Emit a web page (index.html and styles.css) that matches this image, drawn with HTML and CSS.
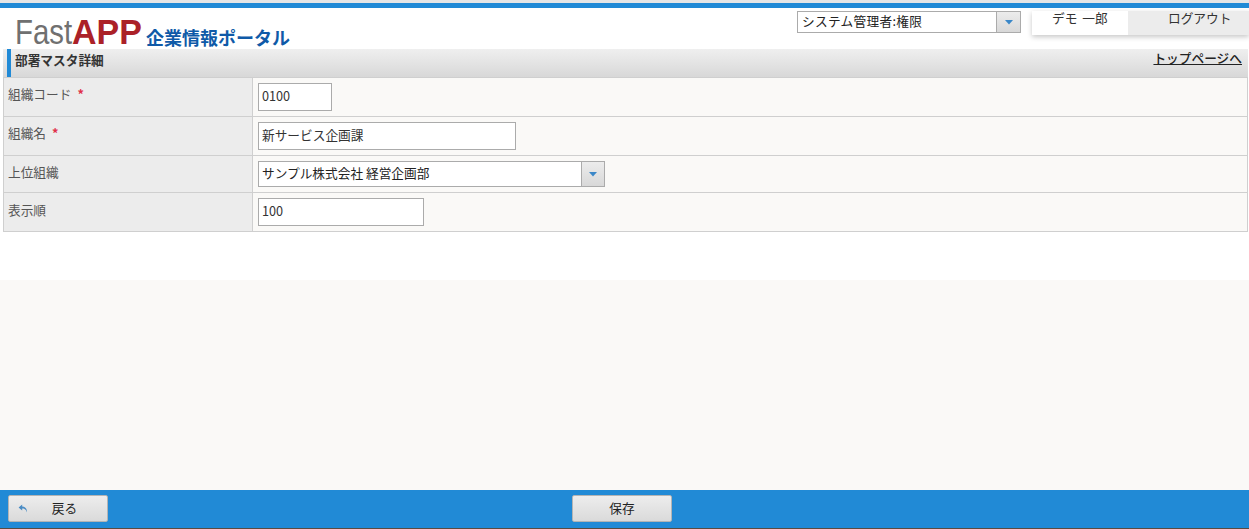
FILE: index.html
```html
<!DOCTYPE html>
<html lang="ja">
<head>
<meta charset="utf-8">
<title>部署マスタ詳細</title>
<link rel="stylesheet" href="styles.css">
</head>
<body>
<div class="page">
  <header class="header">
    <div class="logo">
      <span class="logo-fast">Fast</span><span class="logo-app">APP</span>
      <span class="logo-sub">企業情報ポータル</span>
    </div>
    <div class="header-right">
      <div class="select role-select">
        <span class="select-text">システム管理者:権限</span>
        <span class="select-btn"><svg width="8" height="5" viewBox="0 0 8 5"><path d="M0 0h8L4 4.5z" fill="#3a87c8"/></svg></span>
      </div>
      <div class="user-box">
        <span class="user-name">デモ 一郎</span>
        <span class="logout">ログアウト</span>
      </div>
    </div>
  </header>
  <main class="content">
    <div class="title-bar">
      <h1 class="title">部署マスタ詳細</h1>
      <a class="top-link" href="#">トップページへ</a>
    </div>
    <div class="form">
      <div class="row row-a">
        <div class="label label-a">組織コード<span class="req">*</span></div>
        <div class="field"><div class="input w-code">0100</div></div>
      </div>
      <div class="row row-a">
        <div class="label label-a">組織名<span class="req">*</span></div>
        <div class="field"><div class="input w-name">新サービス企画課</div></div>
      </div>
      <div class="row row-b">
        <div class="label label-b">上位組織</div>
        <div class="field">
          <div class="select parent-select">
            <span class="select-text">サンプル株式会社 経営企画部</span>
            <span class="select-btn"><svg width="8" height="5" viewBox="0 0 8 5"><path d="M0 0h8L4 4.5z" fill="#3a87c8"/></svg></span>
          </div>
        </div>
      </div>
      <div class="row row-c">
        <div class="label label-c">表示順</div>
        <div class="field"><div class="input w-order">100</div></div>
      </div>
    </div>
  </main>
  <div class="spacer"></div>
  <footer class="footer">
    <button class="btn btn-back" type="button">
      <svg class="back-icon" width="10" height="9" viewBox="0 0 10 9"><path d="M4.2 0.5 0.6 3.6l3.6 3V4.6c2 0 3.6.5 4.8 3.8C9 4.6 7.2 2.6 4.2 2.5z" fill="#4a8cc4"/></svg>
      <span>戻る</span>
    </button>
    <button class="btn btn-save" type="button">保存</button>
  </footer>
</div>
</body>
</html>
```
FILE: styles.css
```css
* { box-sizing: border-box; }
html, body { margin: 0; padding: 0; height: 100%; }
body {
  background: #fff;
  font-family: "Noto Sans CJK JP", "Liberation Sans", sans-serif;
  font-size: 12.7px;
  color: #333;
  overflow: hidden;
}
.page {
  height: 529px;
  display: flex;
  flex-direction: column;
  border-top: 3px solid #e6e6e6;
  border-bottom: 1px solid #5a4a40;
}
.header {
  height: 46px;
  flex: none;
  border-top: 5px solid #218ad6;
  display: flex;
  justify-content: space-between;
}
.logo {
  padding: 6px 0 0 15px;
  display: flex;
  align-items: baseline;
  white-space: nowrap;
  height: 41px;
  line-height: 36px;
}
.logo-fast {
  display: inline-block;
  font-family: "Liberation Sans", sans-serif;
  font-size: 35px;
  color: #707070;
  transform: scaleX(0.84);
  transform-origin: left;
  margin-right: -11px;
}
.logo-app {
  display: inline-block;
  font-family: "Liberation Sans", sans-serif;
  font-size: 35px;
  font-weight: 700;
  color: #ab2128;
  transform: scaleX(0.97);
  transform-origin: left;
  margin-right: -2px;
}
.logo-sub {
  font-size: 18px;
  font-weight: 700;
  color: #0f5aa8;
  margin-left: 4px;
  transform: translateY(1px);
}
.header-right {
  display: flex;
  align-items: flex-start;
  padding-top: 3px;
}
.select {
  display: flex;
  background: #fff;
  border: 1px solid #ababab;
}
.select-text {
  flex: 1;
  padding-left: 4px;
  color: #222;
  white-space: nowrap;
}
.select-btn {
  display: flex;
  align-items: center;
  justify-content: center;
  border-left: 1px solid #ababab;
  background: linear-gradient(#ececec, #d8d8d8);
}
.role-select {
  width: 224px;
  height: 22px;
  line-height: 17px;
  letter-spacing: 0.3px;
}
.role-select .select-btn { width: 24px; }
.user-box {
  width: 217px;
  height: 24px;
  margin-left: 11px;
  display: flex;
  box-shadow: 0 2px 5px rgba(0, 0, 0, 0.22);
  line-height: 14px;
  color: #333;
}
.user-name {
  width: 96px;
  padding-left: 20px;
  background: #fff;
  white-space: nowrap;
  word-spacing: 2px;
}
.logout {
  flex: 1;
  padding-left: 40px;
  background: #ececec;
  white-space: nowrap;
}
.content {
  flex: none;
  padding: 0 1px 0 3px;
}
.title-bar {
  height: 28px;
  display: flex;
  justify-content: space-between;
  background: linear-gradient(#efefef, #d8d8d8);
  padding-right: 6px;
}
.title {
  margin: 0 0 0 4px;
  padding-left: 4px;
  border-left: 4px solid #218ad6;
  font-size: 12.7px;
  font-weight: 700;
  color: #333;
  line-height: 22px;
  height: 28px;
}
.top-link {
  color: #222;
  line-height: 18px;
  text-decoration: underline;
  font-weight: 500;
}
.form {
  border: 1px solid #cfcfcf;
  border-bottom-width: 0;
  background: #faf9f7;
}
.row {
  display: flex;
  border-bottom: 1px solid #cfcfcf;
}
.row-a { height: 39px; }
.row-b { height: 37px; }
.row-c { height: 39px; }
.label {
  width: 249px;
  flex: none;
  background: #ececec;
  border-right: 1px solid #cfcfcf;
  padding: 0 0 0 4px;
  color: #555;
}
.label-a { line-height: 32px; }
.label-b { line-height: 31px; }
.label-c { line-height: 33px; }
.req {
  color: #e0304a;
  margin-left: 6px;
  font-weight: 700;
}
.field {
  flex: 1;
  padding: 5px;
}
.input {
  height: 28px;
  background: #fff;
  border: 1px solid #ababab;
  padding-left: 3px;
  line-height: 23px;
  color: #333;
}
.w-code { width: 74px; }
.w-name { width: 258px; }
.w-order { width: 166px; }
.parent-select {
  width: 347px;
  height: 26px;
  line-height: 21px;
}
.parent-select .select-text { padding-left: 3px; }
.parent-select .select-btn { width: 23px; }
.spacer {
  flex: 1;
  margin-top: 48px;
  background: #faf9f7;
}
.footer {
  height: 38px;
  flex: none;
  background: #218ad6;
  padding: 5px 8px 0;
  display: flex;
}
.btn {
  width: 100px;
  height: 27px;
  border: 1px solid #b4b4b4;
  border-radius: 2px;
  background: linear-gradient(#ededed, #dadada);
  font: inherit;
  color: #222;
  padding: 0 0 3px;
  display: flex;
  align-items: center;
  justify-content: center;
}
.btn-back { padding-left: 13px; position: relative; }
.back-icon { position: absolute; left: 9px; top: 8px; }
.btn-save { margin-left: 464px; }
```
